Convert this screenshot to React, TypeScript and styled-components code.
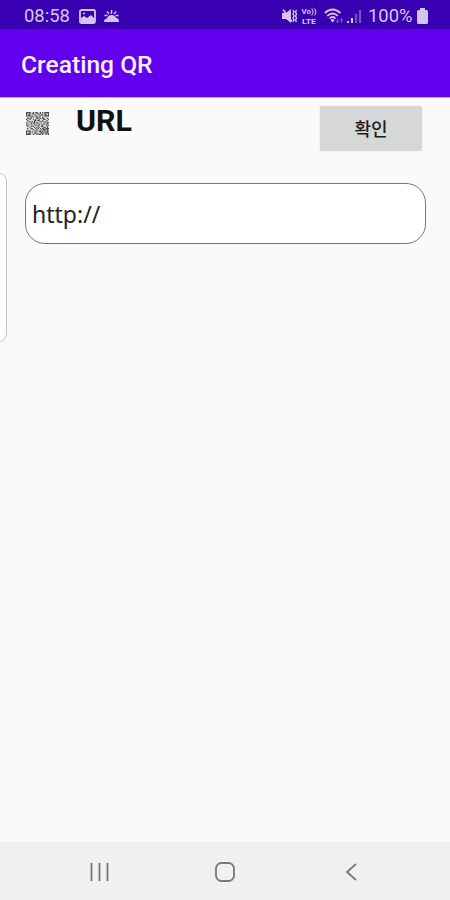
import React from 'react';
import styled, { createGlobalStyle } from 'styled-components';

const GlobalStyle = createGlobalStyle`
  * { box-sizing: border-box; }
  body { margin: 0; background: #fafafa; }
`;

const Screen = styled.div`
  position: relative;
  display: flex;
  flex-direction: column;
  height: 900px;
  overflow: hidden;
  background: #fafafa;
  font-family: Roboto, 'Noto Sans CJK KR', sans-serif;
`;

const StatusBar = styled.header`
  display: flex;
  justify-content: space-between;
  height: 29px;
  padding: 3px 22px 0 24px;
  background: #3800b0;
  color: #d3c5f0;
`;

const StatusGroup = styled.div`
  display: flex;
  align-items: center;
  height: 26px;
`;

const StatusText = styled.span<{ $width: number; $gap: number }>`
  width: ${({ $width }) => $width}px;
  margin-right: ${({ $gap }) => $gap}px;
  font-size: 18.4px;
  line-height: 26px;
  white-space: nowrap;
`;

const StatusIcon = styled.svg<{ $gap?: number }>`
  display: block;
  flex: none;
  overflow: visible;
  margin-right: ${({ $gap = 0 }) => $gap}px;
`;

const AppBar = styled.div`
  display: flex;
  align-items: center;
  height: 69px;
  padding: 3px 21px 0;
  background: #6200ee;
  border-bottom: 1px solid #c7a6f4;
`;

const Title = styled.h1`
  margin: 0;
  color: #f6effe;
  font-size: 24.6px;
  font-weight: 500;
  line-height: 32px;
`;

const Content = styled.main`
  flex: 1;
  padding: 8px 24px 0 25px;
`;

const TypeRow = styled.div`
  display: flex;
  align-items: flex-start;
  height: 77px;
`;

const QrIcon = styled.svg`
  display: block;
  margin: 6px 27px 0 1px;
`;

const TypeName = styled.h2`
  flex: 1;
  margin: 0;
  color: #111;
  font-size: 30.4px;
  font-weight: 700;
  line-height: 30px;
`;

const ConfirmButton = styled.button`
  width: 102px;
  height: 45px;
  margin-right: 4px;
  padding: 0 0 1px;
  border: 0;
  border-radius: 2px;
  background: #d6d7d7;
  box-shadow: 0 0 2px #dcdcdc;
  color: #1c1c1c;
  font-family: 'Noto Sans CJK KR', sans-serif;
  font-size: 18px;
  font-weight: 500;
`;

const UrlInput = styled.input`
  display: block;
  width: 401px;
  height: 61px;
  padding: 0 6px;
  border: 1px solid #777;
  border-radius: 20px;
  outline: 0;
  background: #fff;
  color: #222;
  font-family: 'Noto Sans', sans-serif;
  font-size: 23px;
`;

const EdgeHandle = styled.div`
  position: absolute;
  top: 173px;
  left: -20px;
  width: 27px;
  height: 169px;
  border: 1px solid #c4c4c4;
  border-radius: 8px;
  background: #fff;
`;

const NavBar = styled.nav`
  display: flex;
  justify-content: space-between;
  align-items: center;
  height: 58px;
  padding: 2px 86px 0;
  background: #f0f0f0;
`;

const NavIcon = styled.svg`
  display: block;
  fill: none;
  stroke: #777;
  stroke-width: 1.8;
`;

const qrRows = [
  '11110010110010101111',
  '10010110011010001001',
  '10110001000101101101',
  '11110100110010001111',
  '00001010010100100000',
  '01101000011010110010',
  '10010010100100011001',
  '01000001101100100010',
  '00110101000011010100',
  '10001011011000001011',
  '01001001000101010010',
  '10100100110100100101',
  '01001010001001100010',
  '00010001010100011010',
  '01001100101010110111',
  '00000010010001011010',
  '11110001010110101011',
  '10010100100011010110',
  '10110001101001101011',
  '11110010010110100101',
];

const qrPath = qrRows
  .flatMap((row, y) => [...row].map((cell, x) => (cell === '1' ? `M${x} ${y}h1v1h-1z` : '')))
  .join('');

export default function App() {
  return (
    <Screen>
      <GlobalStyle />
      <StatusBar>
        <StatusGroup>
          <StatusText $width={46} $gap={9}>08:58</StatusText>
          <StatusIcon width="17" height="15" viewBox="0 0 17 15" $gap={8}>
            <rect x="1" y="1" width="15" height="13" rx="1.5" fill="none" stroke="currentColor" strokeWidth="1.8" />
            <path d="M2 13V9l3-2 3 2 4-3 3 3v4z" fill="currentColor" />
            <circle cx="5" cy="4.5" r="1.1" fill="currentColor" />
          </StatusIcon>
          <StatusIcon width="15" height="14" viewBox="0 0 15 14">
            <path d="M0 13q0-3.5 3-3.5 1-3.5 4.5-3.5T12 9q3 0 3 4z" fill="currentColor" />
            <path d="M7.5 1v4M3 2.5l2 2.5M12 2.5L10 5M.5 6.5h3M11.5 6.5h3" stroke="currentColor" strokeWidth="1.4" />
          </StatusIcon>
        </StatusGroup>
        <StatusGroup>
          <StatusIcon width="17" height="18" viewBox="0 0 17 18" $gap={3}>
            <path d="M1 6h4l5-4v14l-5-4H1z" fill="currentColor" />
            <path d="M2 2.5l9 12" stroke="currentColor" strokeWidth="1.6" />
            <path d="M12 3l1 2-1 2 1 2-1 2 1 2-1 2M15.5 3l-1 2 1 2-1 2 1 2-1 2 1 2" fill="none" stroke="currentColor" strokeWidth="1.4" />
          </StatusIcon>
          <StatusIcon width="17" height="22" viewBox="0 0 17 22" $gap={6}>
            <g fill="currentColor" fontFamily="Roboto, sans-serif" fontSize="8" fontWeight="700">
              <text x="0.5" y="9" textLength="15" lengthAdjust="spacingAndGlyphs">Vo))</text>
              <text x="1" y="19" textLength="14" lengthAdjust="spacingAndGlyphs">LTE</text>
            </g>
          </StatusIcon>
          <StatusIcon width="20" height="17" viewBox="0 0 20 17" $gap={3}>
            <g fill="none" stroke="currentColor" strokeWidth="1.7">
              <path d="M.8 5q7.8-7 15.6 0M3.2 8q5.4-5 10.8 0M5.5 10.5q3.1-3 6.2 0" />
            </g>
            <path d="M6.5 12q2.1-1.8 4.2 0l-2.1 2.5z" fill="currentColor" />
            <path d="M13.5 14.5v-4m-1.5 2.5l1.5 2 1.5-2M17.5 15v-4m-1.5 1.5l1.5-2 1.5 2" stroke="#775bc9" fill="none" />
          </StatusIcon>
          <StatusIcon width="15" height="15" viewBox="0 0 15 15" $gap={6}>
            <path d="M1 12v2M5 9v5" stroke="currentColor" strokeWidth="2" />
            <path d="M9 5v9M13 1v13" stroke="#7052c5" strokeWidth="2.2" />
          </StatusIcon>
          <StatusText $width={44} $gap={5}>100%</StatusText>
          <StatusIcon width="11" height="16" viewBox="0 0 11 16">
            <path d="M3 0h5v2h1.5Q11 2 11 3.5v11Q11 16 9.5 16h-8Q0 16 0 14.5v-11Q0 2 1.5 2H3z" fill="currentColor" />
          </StatusIcon>
        </StatusGroup>
      </StatusBar>
      <AppBar>
        <Title>Creating QR</Title>
      </AppBar>
      <Content>
        <TypeRow>
          <QrIcon width="23" height="23" viewBox="0 0 20 20">
            <path d="M0 0h20v20H0z" fill="#d8d8d8" />
            <path d={qrPath} fill="#4b4b4b" />
          </QrIcon>
          <TypeName>URL</TypeName>
          <ConfirmButton>확인</ConfirmButton>
        </TypeRow>
        <UrlInput defaultValue="http://" aria-label="URL" />
      </Content>
      <EdgeHandle />
      <NavBar>
        <NavIcon width="26" height="26" viewBox="0 0 26 26">
          <path d="M5.5 4v18M13.5 4v18M21.5 4v18" />
        </NavIcon>
        <NavIcon width="26" height="26" viewBox="0 0 26 26">
          <rect x="4" y="4" width="18" height="18" rx="5.5" />
        </NavIcon>
        <NavIcon width="26" height="26" viewBox="0 0 26 26">
          <path d="M18 5l-9 8 9 8" />
        </NavIcon>
      </NavBar>
    </Screen>
  );
}
